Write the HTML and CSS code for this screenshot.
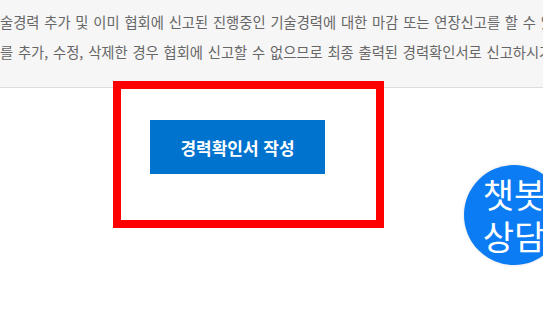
FILE: index.html
```html
<!DOCTYPE html>
<html lang="ko">
<head>
<meta charset="utf-8">
<title>경력확인서 작성</title>
<link rel="stylesheet" href="styles.css">
</head>
<body>
<div class="notice">
  <p class="line">술경력 추가 및 이미 협회에 신고된 진행중인 기술경력에 대한 마감 또는 연장신고를 할 수 있습니다.</p>
  <p class="line">를 추가, 수정, 삭제한 경우 협회에 신고할 수 없으므로 최종 출력된 경력확인서로 신고하시기 바랍니다.</p>
</div>
<div class="highlight">
  <button class="write-btn" type="button">경력확인서 작성</button>
</div>
<a class="chatbot" href="#">챗봇<br>상담</a>
</body>
</html>
```
FILE: styles.css
```css
html, body {
  margin: 0;
  padding: 0;
  background: #ffffff;
  overflow: hidden;
  font-family: "Noto Sans CJK KR", "Noto Sans", sans-serif;
}
.notice {
  height: 88px;
  box-sizing: border-box;
  background: #f6f6f6;
  border-bottom: 1px solid #dcdcdc;
  padding-top: 7px;
  overflow: hidden;
}
.line {
  margin: 0;
  white-space: nowrap;
  font-size: 14.3px;
  line-height: 30px;
  color: #666666;
  word-spacing: 0.8px;
}
.highlight {
  position: relative;
  box-sizing: border-box;
  width: 271px;
  height: 147px;
  margin: -7px 0 0 113px;
  border: 8px solid #ff0000;
  padding: 31px 0 0 29px;
}
.write-btn {
  display: block;
  width: 175px;
  height: 54px;
  border: 0;
  margin: 0;
  padding: 0;
  background: #0073cf;
  color: #ffffff;
  font-family: "Noto Sans CJK KR", "Noto Sans", sans-serif;
  font-size: 17px;
  font-weight: 700;
}
.chatbot {
  position: absolute;
  left: 464px;
  top: 165px;
  width: 100px;
  height: 100px;
  border-radius: 50%;
  background: #0b7cf3;
  box-shadow: 0 0 3px rgba(0, 0, 0, 0.15);
  color: #ffffff;
  text-decoration: none;
  font-size: 34px;
  line-height: 42px;
  text-align: center;
  display: flex;
  align-items: center;
  justify-content: center;
  white-space: nowrap;
}
```
